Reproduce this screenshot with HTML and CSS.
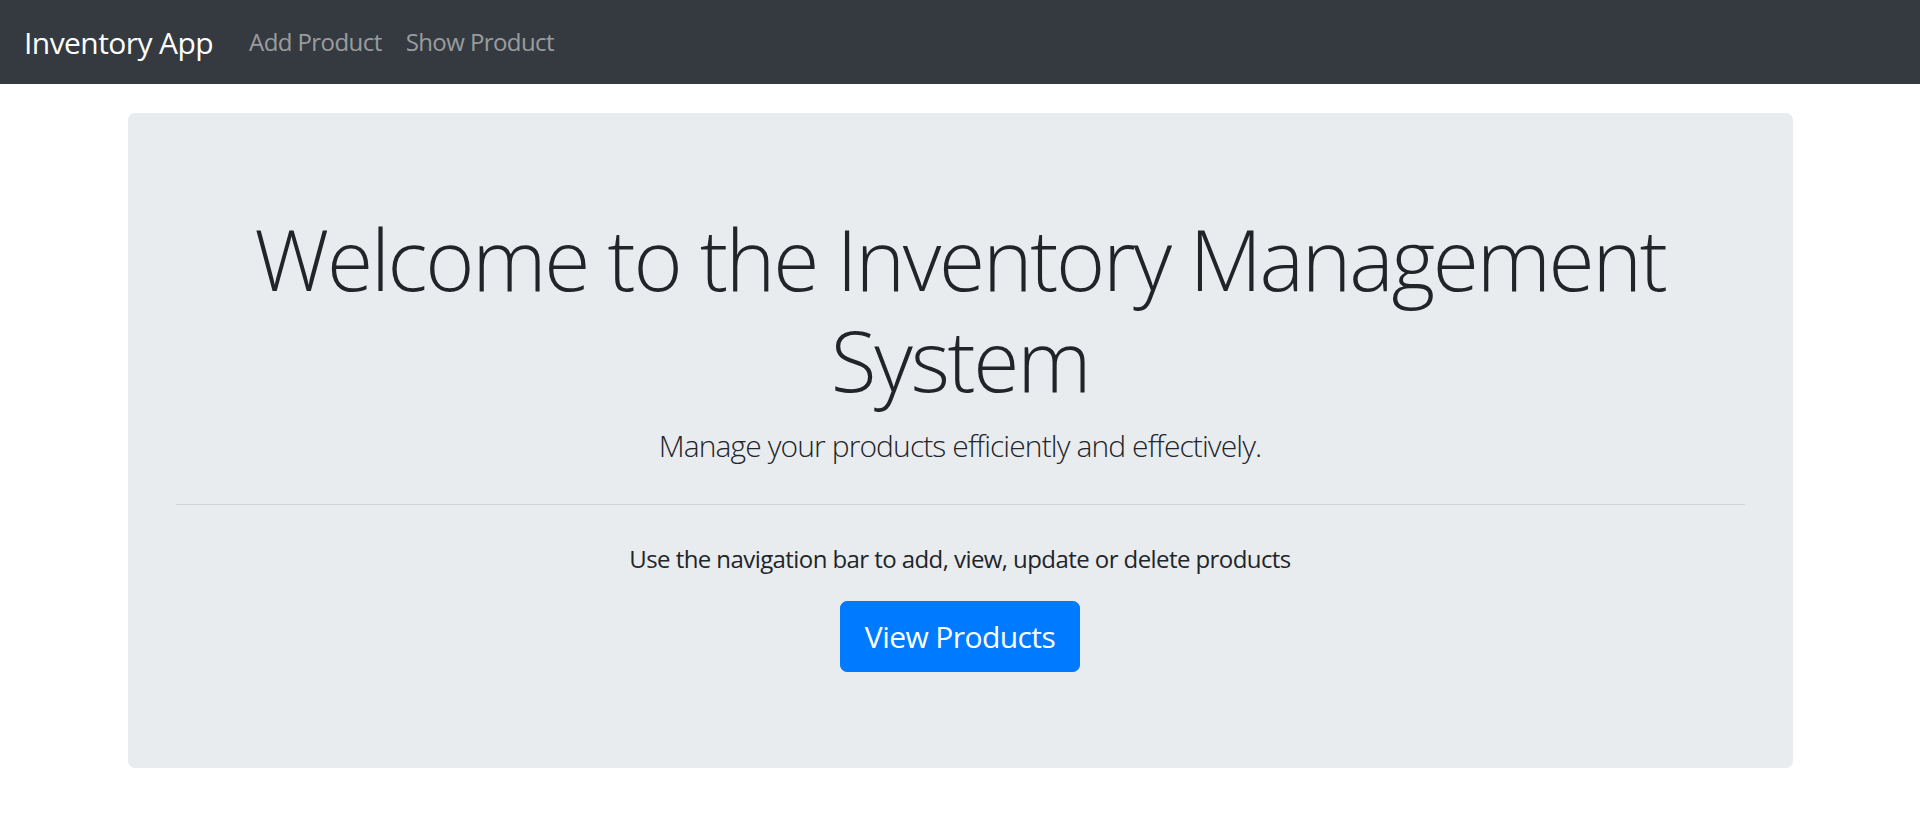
FILE: index.html
```html
<!DOCTYPE html>
<html lang="en">
<head>
<meta charset="utf-8">
<title>Inventory App</title>
<link rel="stylesheet" href="styles.css">
</head>
<body>
<nav class="navbar">
  <a class="brand" href="#">Inventory App</a>
  <ul class="nav">
    <li><a class="nav-link" href="#">Add Product</a></li>
    <li><a class="nav-link" href="#">Show Product</a></li>
  </ul>
</nav>
<main class="container">
  <section class="jumbotron">
    <h1 class="display">Welcome to the Inventory Management System</h1>
    <p class="lead">Manage your products efficiently and effectively.</p>
    <hr class="divider">
    <p class="note">Use the navigation bar to add, view, update or delete products</p>
    <div class="actions"><a class="btn" href="#">View Products</a></div>
  </section>
</main>
</body>
</html>
```
FILE: styles.css
```css
* { box-sizing: border-box; }
html, body { margin: 0; padding: 0; }
body {
  font-family: "Open Sans", "Noto Sans", "Liberation Sans", sans-serif;
  font-size: 24px;
  line-height: 1.5;
  color: #212529;
  background: #fff;
  letter-spacing: -0.024em;
}
a { text-decoration: none; }
.navbar {
  display: flex;
  align-items: center;
  height: 84px;
  padding: 12px 24px;
  background: #343a40;
}
.brand {
  color: #fff;
  font-size: 30px;
  line-height: 45px;
  padding: 7.5px 0;
  margin-right: 24px;
}
.nav {
  display: flex;
  list-style: none;
  margin: 0;
  padding: 0;
}
.nav-link {
  display: block;
  padding: 12px;
  color: rgba(255,255,255,.5);
  font-size: 24px;
  line-height: 36px;
}
.container {
  width: 1710px;
  margin: 0 auto;
  padding: 29px 22.5px 0;
}
.jumbotron {
  background: #e9ecef;
  border-radius: 7px;
  padding: 96px 48px;
  text-align: center;
}
.display {
  margin: 0 0 12px;
  font-size: 84px;
  font-weight: 300;
  line-height: 1.2;
  letter-spacing: -0.027em;
}
.lead {
  margin: 0;
  font-size: 30px;
  font-weight: 300;
  line-height: 45px;
  letter-spacing: -0.03em;
}
.divider {
  margin: 36px 0;
  border: 0;
  border-top: 1.5px solid rgba(0,0,0,.1);
}
.note {
  margin: 0 0 24px;
  font-size: 24px;
  line-height: 36px;
}
.actions { line-height: 0; }
.btn {
  display: inline-block;
  padding: 12px 24px;
  border: 1.5px solid #007bff;
  border-radius: 7px;
  background: #007bff;
  color: #fff;
  font-size: 30px;
  line-height: 45px;
}
```
